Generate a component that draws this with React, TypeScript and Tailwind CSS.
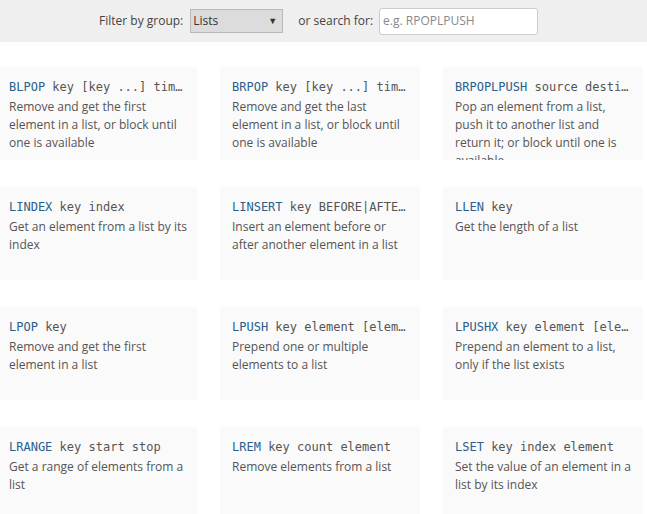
import React from "react";

const commands = [
  { name: "BLPOP", args: "key [key ...] timeout", desc: "Remove and get the first element in a list, or block until one is available" },
  { name: "BRPOP", args: "key [key ...] timeout", desc: "Remove and get the last element in a list, or block until one is available" },
  { name: "BRPOPLPUSH", args: "source destination timeout", desc: "Pop an element from a list, push it to another list and return it; or block until one is available" },
  { name: "LINDEX", args: "key index", desc: "Get an element from a list by its index" },
  { name: "LINSERT", args: "key BEFORE|AFTER pivot element", desc: "Insert an element before or after another element in a list" },
  { name: "LLEN", args: "key", desc: "Get the length of a list" },
  { name: "LPOP", args: "key", desc: "Remove and get the first element in a list" },
  { name: "LPUSH", args: "key element [element ...]", desc: "Prepend one or multiple elements to a list" },
  { name: "LPUSHX", args: "key element [element ...]", desc: "Prepend an element to a list, only if the list exists" },
  { name: "LRANGE", args: "key start stop", desc: "Get a range of elements from a list" },
  { name: "LREM", args: "key count element", desc: "Remove elements from a list" },
  { name: "LSET", args: "key index element", desc: "Set the value of an element in a list by its index" },
];

export default function App() {
  return (
    <div className="w-[647px] h-[514px] overflow-hidden bg-white font-['Open_Sans',sans-serif] text-[12px] text-[#555]">
      <div className="h-[42px] bg-[#efefef] flex items-center pl-[99px]">
        <span className="text-[#444]">Filter by group:</span>
        <div className="ml-[7px] w-[93px] h-[24px] bg-[#dcdcdc] border border-[#b9b9b9] flex items-center justify-between pl-[2px] pr-[5px] text-[#333]">
          <span>Lists</span>
          <span className="text-[9px] text-[#333]">▼</span>
        </div>
        <span className="ml-[15px] text-[#444]">or search for:</span>
        <div className="ml-[6px] w-[159px] h-[27px] bg-white border border-[#ccc] rounded-[3px] flex items-center pl-[3px] text-[#888]">
          e.g. RPOPLPUSH
        </div>
      </div>
      <div className="grid grid-cols-[200px_200px_200px] gap-x-[23px] gap-y-[27px] ml-[-3px] mt-[25px]">
        {commands.map((c) => (
          <div key={c.name} className="h-[93px] bg-[#fafafa] overflow-hidden pt-[10px] pl-[12px] pr-[9px]">
            <div className="font-['DejaVu_Sans_Mono',monospace] text-[12px] leading-[20px] whitespace-nowrap overflow-hidden text-ellipsis pr-[3px]">
              <span className="text-[#2a5e8c]">{c.name}</span> <span className="text-[#555]">{c.args}</span>
            </div>
            <div className="mt-[1px] text-[12px] leading-[18px]">{c.desc}</div>
          </div>
        ))}
      </div>
    </div>
  );
}
